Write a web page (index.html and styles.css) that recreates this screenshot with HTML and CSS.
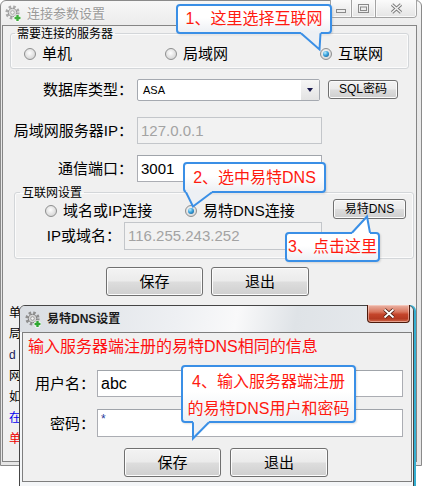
FILE: index.html
```html
<!DOCTYPE html>
<html lang="zh-CN">
<head>
<meta charset="utf-8">
<title>连接参数设置</title>
<link rel="stylesheet" href="styles.css">
</head>
<body>
<div class="desk">

  <div class="win main">
    <div class="tbar">
      <svg class="ico" width="17" height="17" viewBox="0 0 17 17">
        <circle cx="7.5" cy="7.5" r="5.6" fill="none" stroke="#a9a9a9" stroke-width="3" stroke-dasharray="2.4 2"/>
        <circle cx="7.5" cy="7.5" r="4.2" fill="#dcdcdc" stroke="#9a9a9a" stroke-width="1"/>
        <circle cx="7.5" cy="7.5" r="1.8" fill="#f4f4f4" stroke="#a0a0a0" stroke-width="0.8"/>
        <path d="M12.5 9.5v7M9 13h7" stroke="#fff" stroke-width="4"/>
        <path d="M12.5 10v6M9.5 13h6" stroke="#3fae3c" stroke-width="2.4"/>
      </svg>
      <span class="ttl">连接参数设置</span>
      <div class="caps">
        <span class="cap cmin"><svg width="10" height="4" viewBox="0 0 10 4"><rect x="0.5" y="0.5" width="9" height="3" fill="#eee" stroke="#8a8a8a"/></svg></span>
        <span class="cap cmax"><svg width="11" height="9" viewBox="0 0 11 9"><rect x="0.5" y="0.5" width="10" height="8" fill="none" stroke="#8a8a8a"/><rect x="2.5" y="3" width="6" height="3.5" fill="#eee" stroke="#8a8a8a"/></svg></span>
        <span class="cap cclose"><svg width="13" height="11" viewBox="0 0 13 11"><path d="M2 1.5l9 8M11 1.5l-9 8" stroke="#7c7c7c" stroke-width="3.4"/><path d="M2 1.5l9 8M11 1.5l-9 8" stroke="#f2f2f2" stroke-width="1.5"/></svg></span>
      </div>
    </div>

    <div class="client">
      <fieldset class="grp g1">
        <legend>需要连接的服务器</legend>
        <div class="r3">
          <div class="opt"><span class="rb"></span><span>单机</span></div>
          <div class="opt"><span class="rb"></span><span>局域网</span></div>
          <div class="opt"><span class="rb on"></span><span>互联网</span></div>
        </div>
      </fieldset>

      <div class="row r-db">
        <span class="lbl">数据库类型：</span>
        <div class="select"><span class="val">ASA</span><span class="dd"><i class="tri"></i></span></div>
        <button class="sbtn">SQL密码</button>
      </div>
      <div class="row r-ip">
        <span class="lbl">局域网服务器IP：</span>
        <div class="inp dis">127.0.0.1</div>
      </div>
      <div class="row r-port">
        <span class="lbl">通信端口：</span>
        <div class="inp">3001</div>
      </div>

      <fieldset class="grp g2">
        <legend>互联网设置</legend>
        <div class="r2">
          <div class="opt"><span class="rb"></span><span>域名或IP连接</span></div>
          <div class="opt"><span class="rb on"></span><span>易特DNS连接</span></div>
          <button class="sbtn dnsbtn">易特DNS</button>
        </div>
        <div class="row r-host">
          <span class="lbl">IP或域名：</span>
          <div class="inp dis">116.255.243.252</div>
        </div>
      </fieldset>

      <div class="btns">
        <button class="btn">保存</button>
        <button class="btn">退出</button>
      </div>

      <div class="notes">
        <span>单</span>
        <span>局</span>
        <span class="navy">d</span>
        <span>网</span>
        <span>如</span>
        <span class="blue">在</span>
        <span class="red">单</span>
      </div>
    </div>
  </div>

  <div class="win dlg">
    <div class="tbar dtbar">
      <svg class="ico" width="17" height="17" viewBox="0 0 17 17">
        <circle cx="7.5" cy="7.5" r="5.6" fill="none" stroke="#8f8f8f" stroke-width="3" stroke-dasharray="2.4 2"/>
        <circle cx="7.5" cy="7.5" r="4.2" fill="#d6d6d6" stroke="#858585" stroke-width="1"/>
        <circle cx="7.5" cy="7.5" r="1.8" fill="#f4f4f4" stroke="#8a8a8a" stroke-width="0.8"/>
        <path d="M12.5 9.5v7M9 13h7" stroke="#fff" stroke-width="4"/>
        <path d="M12.5 10v6M9.5 13h6" stroke="#2fa632" stroke-width="2.4"/>
      </svg>
      <span class="dttl">易特DNS设置</span>
      <span class="dclose"><svg width="14" height="11" viewBox="0 0 14 11"><path d="M2.5 1.5l9 8M11.5 1.5l-9 8" stroke="#4a1a0e" stroke-width="3.6"/><path d="M2.5 1.5l9 8M11.5 1.5l-9 8" stroke="#fff" stroke-width="1.8"/></svg></span>
    </div>
    <div class="dclient">
      <p class="info">输入服务器端注册的易特DNS相同的信息</p>
      <div class="row d-user">
        <span class="lbl dl">用户名：</span>
        <div class="inp dinp">abc</div>
      </div>
      <div class="row d-pass">
        <span class="lbl dl">密码：</span>
        <div class="inp dinp pw">*</div>
      </div>
      <div class="btns dbtns">
        <button class="btn">保存</button>
        <button class="btn">退出</button>
      </div>
    </div>
  </div>

  <div class="callout c1">1、这里选择互联网</div>
  <div class="callout c2">2、选中易特DNS</div>
  <div class="callout c3">3、点击这里</div>
  <div class="callout c4">4、输入服务器端注册<br>的易特DNS用户和密码</div>

  <svg class="tails" width="425" height="486" viewBox="0 0 425 486">
    <polygon points="301,31.6 321,31.6 320.5,33.5 319.5,49.5 301,33.5" fill="#edf0f4"/>
    <path d="M301,33.2 L319.5,49.5 L320.5,33.2" fill="none" stroke="#3a8fe6" stroke-width="2"/>
    <polygon points="186,190.6 212,190.6 212,192.4 193,206 186,192.4" fill="#edf0f4"/>
    <path d="M186,192.2 L193,206.5 L212,192.2" fill="none" stroke="#3a8fe6" stroke-width="2"/>
    <polygon points="352,235.4 370,235.4 370,233 367,216.5 352,233" fill="#ffffff"/>
    <path d="M352,232.8 L367,216.5 L370,232.8" fill="none" stroke="#3a8fe6" stroke-width="2"/>
    <polygon points="193,420.6 209,420.6 209,422.4 193,438 193,422.4" fill="#edf0f4"/>
    <path d="M193,422.2 L193,438.5 L209,422.2" fill="none" stroke="#3a8fe6" stroke-width="2"/>
  </svg>
</div>
</body>
</html>
```

FILE: styles.css
```css
* { box-sizing: border-box; }
html, body { margin: 0; padding: 0; background: #ffffff; }
body {
  font-family: "Liberation Sans", "Noto Sans CJK SC", sans-serif;
  color: #000;
}
p { margin: 0; }
button { font-family: inherit; padding: 0; margin: 0; cursor: default; }

.desk {
  position: relative;
  width: 425px;
  height: 486px;
  overflow: hidden;
  background: #ffffff;
}

/* ---------- windows ---------- */
.win { position: absolute; display: flex; flex-direction: column; }

.main {
  left: 0; top: 0;
  width: 422px; height: 466px;
  border: 1px solid #8a8a8a;
  border-radius: 6px 6px 0 0;
  background: linear-gradient(#f7f7f7, #e9e9e9 30px, #e6e6e6);
  padding: 0 4px 3px 1px;
}

.tbar {
  height: 24px;
  flex: none;
  display: flex;
  align-items: center;
  padding-left: 3px;
  position: relative;
}
.ico { flex: none; display: block; }
.ttl {
  margin-left: 5px;
  font-family: "Noto Sans CJK SC", sans-serif;
  font-size: 13px;
  line-height: 16px;
  color: #9a9a9a;
  text-shadow: 0 0 3px #fff;
}

.caps {
  margin-left: auto;
  margin-right: 0;
  align-self: flex-start;
  margin-top: -1px;
  display: flex;
  height: 18px;
  border: 1px solid #a3a3a3;
  border-top: none;
  border-radius: 0 0 4px 4px;
  overflow: hidden;
  background: linear-gradient(#fbfbfb, #e4e4e4);
}
.cap {
  height: 17px;
  display: flex;
  align-items: center;
  justify-content: center;
  box-shadow: inset 0 0 0 1px #fafafa;
}
.cap svg { display: block; }
.cmin { width: 21px; border-right: 1px solid #a3a3a3; align-items: flex-end; padding-bottom: 4px; }
.cmax { width: 24px; border-right: 1px solid #a3a3a3; }
.cclose { width: 40px; }

.client {
  flex: 1;
  border: 1px solid #858585;
  background: #f0f0f0;
  display: flex;
  flex-direction: column;
  overflow: hidden;
}

/* ---------- group boxes ---------- */
.grp {
  margin: 0;
  padding: 0;
  border: 1px solid #d3d6d9;
  border-radius: 3px;
  box-shadow: inset 0 0 0 1px #fbfbfb;
  min-inline-size: 0;
}
.grp legend {
  font-family: "Noto Sans CJK SC", sans-serif;
  font-size: 12px;
  line-height: 14px;
  padding: 0 2px;
  margin-left: 4px;
}
.g1 { width: 399px; margin: 0 0 0 7px; }
.g2 { width: 400px; margin: 3px 0 0 11px; padding-bottom: 8px; }
.g2 legend { margin-left: 5px; }

.opt {
  display: flex;
  align-items: center;
  font-size: 15px;
  line-height: 18px;
  white-space: nowrap;
}
.opt .rb { margin-right: 6px; }

.r3 {
  height: 28px;
  display: grid;
  grid-template-columns: 141px 155px 1fr;
  align-items: center;
  padding-left: 13px;
}

.r2 {
  height: 23px;
  display: grid;
  grid-template-columns: 140px 148px 73px;
  align-items: start;
  padding-left: 30px;
}
.r2 .opt { margin-top: 3px; }

.rb {
  width: 12px; height: 12px;
  border-radius: 50%;
  border: 1px solid #8e8f8f;
  background: radial-gradient(circle at 45% 40%, #fefefe 0, #e6e6e6 45%, #cbcbcb 100%);
  position: relative;
  flex: none;
  display: block;
}
.rb.on::after {
  content: "";
  position: absolute;
  left: 2px; top: 2px;
  width: 6px; height: 6px;
  border-radius: 50%;
  background: radial-gradient(circle at 35% 30%, #b9ecff 0, #3aa2dc 45%, #0d4f86 100%);
}

/* ---------- form rows ---------- */
.row { display: flex; align-items: center; flex: none; }
.lbl {
  font-size: 15px;
  text-align: right;
  white-space: nowrap;
  flex: none;
}

.r-db { margin-top: 10px; height: 22px; align-items: flex-start; }
.r-db .lbl { width: 130px; line-height: 22px; }
.r-ip { margin-top: 16px; height: 27px; }
.r-ip .lbl { width: 130px; line-height: 27px; }
.r-port { margin-top: 11px; height: 27px; }
.r-port .lbl { width: 130px; line-height: 27px; }

.select {
  margin-left: 4px;
  width: 183px;
  height: 22px;
  border: 1px solid #a5a9b0;
  border-radius: 2px;
  background: #fff;
  display: flex;
}
.select .val {
  flex: 1;
  font-size: 11px;
  line-height: 20px;
  padding-left: 5px;
}
.select .dd {
  width: 18px;
  background: linear-gradient(#f6f6f6, #e3e3e3);
  display: flex;
  align-items: center;
  justify-content: center;
}
.tri {
  display: block;
  width: 0; height: 0;
  border-left: 3.5px solid transparent;
  border-right: 3.5px solid transparent;
  border-top: 4px solid #17174d;
}

.sbtn {
  flex: none;
  height: 19px;
  border: 1px solid #707070;
  border-radius: 3px;
  background: linear-gradient(#f3f3f3 0%, #ebebeb 48%, #dddddd 52%, #cfcfcf 100%);
  box-shadow: inset 0 0 0 1px #fbfbfb;
  font-size: 12px;
  line-height: 17px;
  color: #000;
}
.r-db .sbtn { width: 70px; margin: 1px 0 0 8px; }
.dnsbtn { width: 73px; height: 20px; line-height: 18px; }

.inp {
  margin-left: 4px;
  width: 185px;
  height: 100%;
  border: 1px solid #abadb3;
  border-top-color: #a0a4aa;
  background: #fff;
  font-size: 15px;
  line-height: 25px;
  padding-left: 3px;
  white-space: nowrap;
  overflow: hidden;
}
.inp.dis {
  border-color: #c3c6ca;
  background: #f2f2f2;
  color: #a3a3a3;
}

.r-host { margin-top: 0; height: 28px; }
.r-host .lbl { width: 106px; line-height: 28px; }
.r-host .inp { margin-left: 3px; width: 198px; line-height: 26px; }

.btns {
  display: flex;
  gap: 8px;
  padding-left: 103px;
  margin-top: 8px;
  flex: none;
}
.btn {
  width: 97px;
  height: 29px;
  border: 1px solid #707070;
  border-radius: 3px;
  background: linear-gradient(#f3f3f3 0%, #ebebeb 48%, #dddddd 52%, #cfcfcf 100%);
  box-shadow: inset 0 0 0 1px #fcfcfc;
  font-size: 15px;
  line-height: 27px;
  color: #000;
}
.btns .btn + .btn { width: 98px; }

.notes {
  margin-top: 7px;
  padding-left: 6px;
  display: flex;
  flex-direction: column;
  align-items: flex-start;
  font-size: 12px;
  line-height: 21px;
  white-space: nowrap;
  color: #000;
}
.notes .navy { color: #1a1a5a; }
.notes .blue { color: #0000ee; }
.notes .red { color: #ee0000; }

/* ---------- DNS dialog ---------- */
.dlg {
  left: 19px; top: 305px;
  width: 395px; height: 200px;
  border: 1px solid #454545;
  border-radius: 6px 6px 0 0;
  background: #f4f6f8;
  padding: 0 1px 0 2px;
  box-shadow: 2px 0 0 #34aed0;
}
.dtbar {
  height: 26px;
  background: linear-gradient(100deg, #d9dde2 0%, #eef0f3 40%, #f9f9fa 55%, #dfe3e7 70%, #e9ecef 100%);
  margin: 0 -1px 0 -2px;
  padding-left: 5px;
  border-radius: 5px 5px 0 0;
}
.dttl {
  margin-left: 5px;
  font-family: "Liberation Sans", "Noto Sans CJK SC", sans-serif;
  font-size: 12px;
  font-weight: bold;
  line-height: 16px;
  color: #1b1b1b;
}
.dclose {
  margin-left: auto;
  margin-right: 3px;
  align-self: flex-start;
  margin-top: -1px;
  width: 43px;
  height: 18px;
  border: 1px solid #4b1a0c;
  border-top: none;
  border-radius: 0 0 4px 4px;
  background: linear-gradient(#eab4a6 0%, #d9765e 40%, #c4452b 55%, #b53a22 80%, #d06a4c 100%);
  box-shadow: inset 0 0 0 1px rgba(255, 220, 210, 0.5);
  display: flex;
  align-items: center;
  justify-content: center;
}
.dclose svg { display: block; }

.dclient {
  height: 150px;
  flex: none;
  border: 1px solid #7e7e7e;
  background: #f0f0f0;
  display: flex;
  flex-direction: column;
}
.info {
  padding: 4px 0 0 5px;
  font-size: 16px;
  line-height: 20px;
  color: #ff1010;
  white-space: nowrap;
}
.d-user { margin-top: 13px; height: 27px; }
.d-pass { margin-top: 12px; height: 28px; }
.lbl.dl { width: 72px; line-height: 27px; }
.dinp {
  margin-left: 2px;
  width: 306px;
  font-size: 16px;
  line-height: 25px;
}
.dinp.pw { font-size: 12px; line-height: 18px; color: #2a3a9a; }
.dbtns { padding-left: 101px; gap: 9px; margin-top: 11px; }

/* ---------- callouts ---------- */
.callout {
  position: absolute;
  border: 2px solid #3a8fe6;
  border-radius: 4px;
  background: linear-gradient(#ffffff 45%, #edf0f4 100%);
  color: #ff1a10;
  font-size: 16px;
  text-align: center;
  white-space: nowrap;
  box-shadow: 1px 1px 2px rgba(0, 0, 0, 0.12);
}
.c1 { left: 176px; top: 4px; width: 156px; height: 30px; line-height: 26px; }
.c2 { left: 183px; top: 162px; width: 143px; height: 31px; line-height: 27px; }
.c3 { left: 285px; top: 232px; width: 95px; height: 30px; line-height: 26px; }
.c4 { left: 181px; top: 365px; width: 175px; height: 58px; line-height: 27px; padding-top: 1px; }

.tails {
  position: absolute;
  left: 0; top: 0;
  pointer-events: none;
}
```
